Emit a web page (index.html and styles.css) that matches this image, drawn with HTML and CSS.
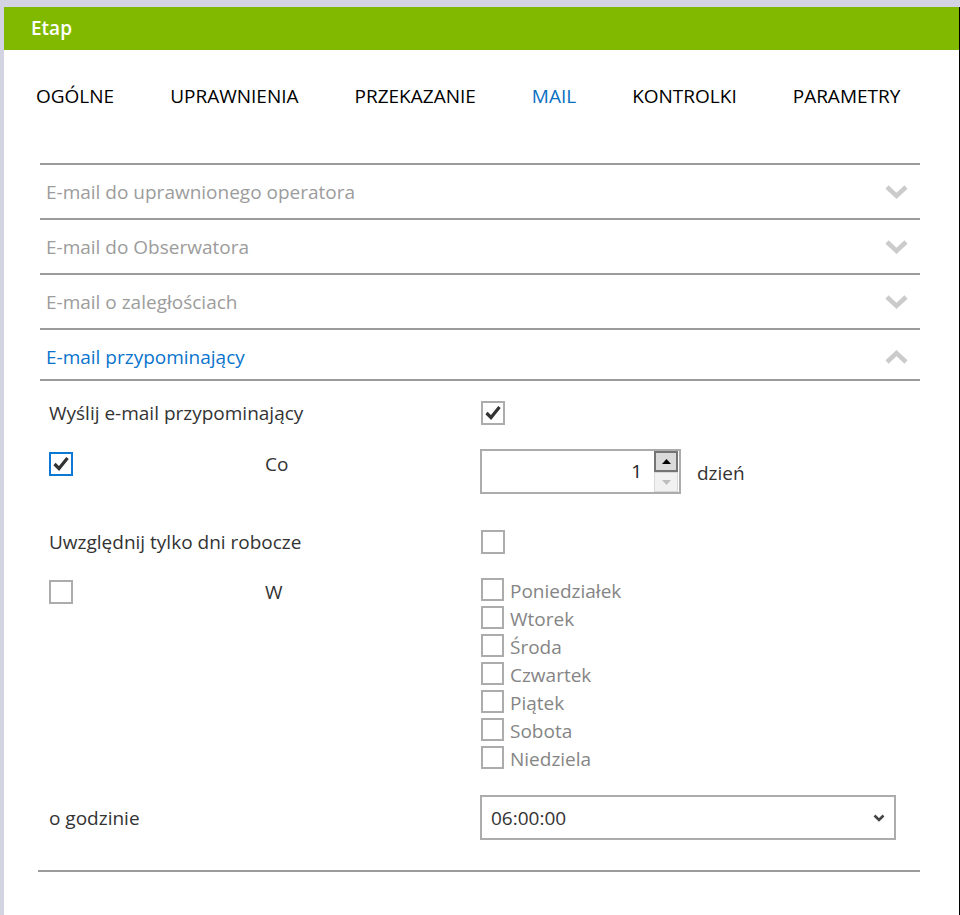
FILE: index.html
```html
<!DOCTYPE html>
<html lang="pl">
<head>
<meta charset="utf-8">
<title>Etap</title>
<link rel="stylesheet" href="styles.css">
</head>
<body>
<div class="window">
  <header class="titlebar">Etap</header>
  <nav class="tabs">
    <span class="tab">OGÓLNE</span>
    <span class="tab">UPRAWNIENIA</span>
    <span class="tab">PRZEKAZANIE</span>
    <span class="tab active">MAIL</span>
    <span class="tab">KONTROLKI</span>
    <span class="tab">PARAMETRY</span>
  </nav>
  <section class="accordion">
    <div class="acc-head">
      <span>E-mail do uprawnionego operatora</span>
      <svg class="chev" width="23" height="16" viewBox="0 0 23 16"><polyline points="2,3 11.5,12 21,3" fill="none" stroke="#cbcbcb" stroke-width="4.5"/></svg>
    </div>
    <div class="acc-head">
      <span>E-mail do Obserwatora</span>
      <svg class="chev" width="23" height="16" viewBox="0 0 23 16"><polyline points="2,3 11.5,12 21,3" fill="none" stroke="#cbcbcb" stroke-width="4.5"/></svg>
    </div>
    <div class="acc-head">
      <span>E-mail o zaległościach</span>
      <svg class="chev" width="23" height="16" viewBox="0 0 23 16"><polyline points="2,3 11.5,12 21,3" fill="none" stroke="#cbcbcb" stroke-width="4.5"/></svg>
    </div>
    <div class="acc-head active">
      <span>E-mail przypominający</span>
      <svg class="chev" width="23" height="16" viewBox="0 0 23 16"><polyline points="2,13 11.5,4 21,13" fill="none" stroke="#cbcbcb" stroke-width="4.5"/></svg>
    </div>
    <div class="acc-body">
      <div class="row r1">
        <span class="label span2">Wyślij e-mail przypominający</span>
        <span class="cb checked"><svg width="20" height="20" viewBox="0 0 20 20"><polyline points="3.5,10 8,14.5 16.5,4" fill="none" stroke="#333" stroke-width="3.2"/></svg></span>
      </div>
      <div class="row r2">
        <span class="cb checked focus"><svg width="20" height="20" viewBox="0 0 20 20"><polyline points="3.5,10 8,14.5 16.5,4" fill="none" stroke="#333" stroke-width="3.2"/></svg></span>
        <span class="label small-top">Co</span>
        <div class="num-wrap">
          <div class="num">
            <span class="num-val">1</span>
            <div class="spinner">
              <span class="spin up"><svg width="9" height="5" viewBox="0 0 9 5"><polygon points="0,5 4.5,0 9,5" fill="#000"/></svg></span>
              <span class="spin down"><svg width="9" height="5" viewBox="0 0 9 5"><polygon points="0,0 4.5,5 9,0" fill="#bdbdbd"/></svg></span>
            </div>
          </div>
          <span class="label unit">dzień</span>
        </div>
      </div>
      <div class="row r3">
        <span class="label span2">Uwzględnij tylko dni robocze</span>
        <span class="cb"></span>
      </div>
      <div class="row r4">
        <span class="cb top2"></span>
        <span class="label w-top">W</span>
        <ul class="days">
          <li class="day"><span class="cb sm"></span><span class="day-label">Poniedziałek</span></li>
          <li class="day"><span class="cb sm"></span><span class="day-label">Wtorek</span></li>
          <li class="day"><span class="cb sm"></span><span class="day-label">Środa</span></li>
          <li class="day"><span class="cb sm"></span><span class="day-label">Czwartek</span></li>
          <li class="day"><span class="cb sm"></span><span class="day-label">Piątek</span></li>
          <li class="day"><span class="cb sm"></span><span class="day-label">Sobota</span></li>
          <li class="day"><span class="cb sm"></span><span class="day-label">Niedziela</span></li>
        </ul>
      </div>
      <div class="row r5">
        <span class="label span2">o godzinie</span>
        <div class="select">
          <span class="select-val">06:00:00</span>
          <svg width="12" height="8" viewBox="0 0 12 8"><polyline points="1.5,1.5 6,6 10.5,1.5" fill="none" stroke="#444" stroke-width="2.6"/></svg>
        </div>
      </div>
    </div>
    <div class="acc-end"></div>
  </section>
</div>
</body>
</html>
```

FILE: styles.css
```css
html, body {
  margin: 0;
  padding: 0;
}
body {
  background: #d3d3e1;
  font-family: "Open Sans", "Noto Sans", sans-serif;
  width: 960px;
  height: 915px;
  overflow: hidden;
}
.window {
  margin: 7px 0 0 4px;
  width: 955px;
  height: 908px;
  background: #fff;
  border-right: 1px solid #000;
}
.titlebar {
  height: 43px;
  background: #80b900;
  color: #fff;
  font-size: 19px;
  font-weight: 600;
  line-height: 43px;
  padding-left: 27px;
}
.tabs {
  display: flex;
  gap: 56px;
  padding: 34px 0 0 32px;
  font-size: 19px;
  line-height: 24px;
  color: #000;
}
.tab.active {
  color: #0a6fc2;
}
.accordion {
  margin: 55px 0 0 36px;
  width: 880px;
}
.acc-head {
  display: flex;
  align-items: center;
  justify-content: space-between;
  box-sizing: content-box;
  height: 53px;
  border-top: 2px solid #9b9b9b;
  padding: 0 12px 0 6px;
  font-size: 19px;
  line-height: 26px;
  color: #9c9c9c;
}
.acc-head.active {
  color: #0a74cc;
  height: 45px;
  padding-top: 4px;
  border-bottom: 2px solid #9b9b9b;
}
.acc-body {
  padding: 14px 0 0 9px;
}
.row {
  display: grid;
  grid-template-columns: 216px 215px 1fr;
}
.span2 {
  grid-column: 1 / 3;
}
.label {
  font-size: 19px;
  line-height: 26px;
  color: #333;
}
.r1, .r3 {
  height: 35px;
  align-items: center;
}
.r2 {
  margin-top: 19px;
  height: 45px;
  align-items: start;
}
.r3 {
  margin-top: 30px;
}
.r4 {
  margin-top: 19px;
  align-items: start;
}
.r5 {
  margin-top: 21px;
  height: 45px;
  align-items: center;
}
.cb {
  box-sizing: border-box;
  width: 24px;
  height: 24px;
  border: 2px solid #acacac;
  background: #fff;
  display: flex;
  align-items: center;
  justify-content: center;
  margin-left: 1px;
}
.cb.focus {
  border-color: #0a78d4;
  margin: 3px 0 0 0;
}
.cb.top2 {
  margin: 2px 0 0 0;
}
.cb.sm {
  width: 23px;
  height: 23px;
  margin-left: 1px;
}
.small-top {
  margin-top: 2px;
}
.w-top {
  margin-top: 1px;
}
.num-wrap {
  display: flex;
  align-items: center;
}
.num {
  box-sizing: border-box;
  width: 201px;
  height: 45px;
  border: 2px solid #acacac;
  display: flex;
}
.num-val {
  flex: 1;
  text-align: right;
  padding-right: 12px;
  font-size: 19px;
  line-height: 41px;
  color: #222;
}
.spinner {
  width: 25px;
  display: flex;
  flex-direction: column;
}
.spin {
  box-sizing: border-box;
  width: 24px;
  display: flex;
  align-items: center;
  justify-content: center;
}
.spin.up {
  height: 21px;
  background: #dadada;
  border: 2px solid #747474;
}
.spin.down {
  height: 20px;
  background: #f1f1f1;
  border: 1px solid #d8d8d8;
}
.unit {
  margin-left: 16px;
  margin-top: 2px;
}
.days {
  list-style: none;
  margin: 0;
  padding: 0;
}
.day {
  display: flex;
  align-items: flex-start;
  height: 28px;
}
.day-label {
  margin-left: 6px;
  padding-top: 2px;
  font-size: 19px;
  line-height: 23px;
  color: #858585;
}
.select {
  box-sizing: border-box;
  width: 416px;
  height: 45px;
  border: 2px solid #acacac;
  display: flex;
  align-items: center;
  justify-content: space-between;
  padding: 0 9px 0 9px;
}
.select-val {
  font-size: 19px;
  color: #333;
}
.acc-end {
  margin: 30px 0 0 -2px;
  width: 882px;
  border-top: 2px solid #9b9b9b;
}
```
